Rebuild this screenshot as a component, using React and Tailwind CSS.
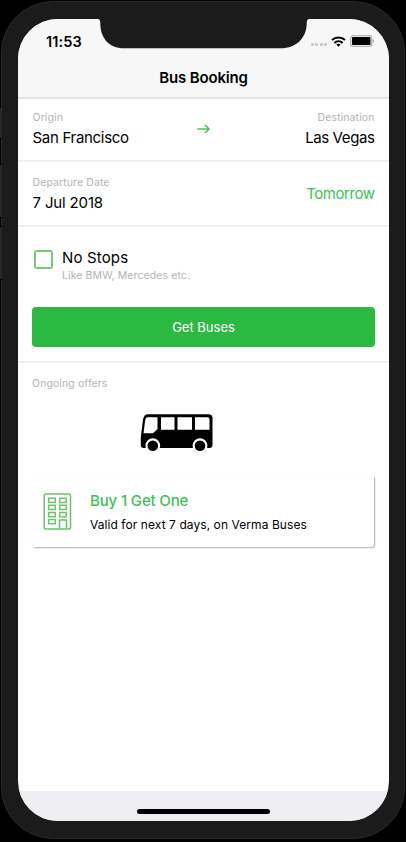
function Wifi() {
  return (
    <svg width="15" height="11" viewBox="0 0 15 11" fill="none" stroke="#000" strokeWidth="2.100">
      <path d="M1 4.1C4.7.7 10.3.7 14 4.1" />
      <path d="M3.4 6.9c2.4-2.2 5.800-2.200 8.200 0" />
      <path d="M7.500 10.700 5.300 8.600c1.300-1 3.100-1 4.400 0z" fill="#000" stroke="none" />
    </svg>
  );
}

function Battery() {
  return (
    <svg width="25" height="12" viewBox="0 0 25 12">
      <rect x=".7" y=".7" width="21" height="10.600" rx="2.300" fill="#f7f7f7" stroke="#b4b4b4" strokeWidth="1.300" />
      <rect x="2" y="2" width="18.500" height="8" rx="1" fill="#000" />
      <path d="M22.700 4v4c.9-.3 1.400-1 1.400-2s-.5-1.700-1.400-2z" fill="#aaa" />
    </svg>
  );
}

function StatusBar() {
  return (
    <div className="flex h-11 shrink-0 items-start justify-between pl-[28px] pr-[14px]">
      <span className="mt-[13px] text-[14.500px] leading-5 font-semibold tracking-[0.15px]">11:53</span>
      <div className="mt-[16px] flex items-center">
        <div className="mt-[7px] mr-[4px] flex gap-[1.500px]">
          <i className="size-[3px] rounded-[1px] bg-[#c8c8c8]" />
          <i className="size-[3px] rounded-[1px] bg-[#c8c8c8]" />
          <i className="size-[3px] rounded-[1px] bg-[#c8c8c8]" />
          <i className="size-[3px] rounded-[1px] bg-[#c8c8c8]" />
        </div>
        <Wifi />
        <div className="ml-[4px]"><Battery /></div>
      </div>
    </div>
  );
}

function Notch() {
  return (
    <svg className="absolute top-0 left-[80px]" width="211" height="30" viewBox="0 0 211 30">
      <path d="M0 0C2 .2 2.300 2 2.300 5C2.600 19 11 29.300 26 29.300H183C198 29.300 208.400 19 208.700 5C208.700 2 209 .2 211 0Z" fill="#1b1b1b" />
    </svg>
  );
}

function Arrow() {
  return (
    <svg width="13" height="10" viewBox="0 0 13 10" fill="none" stroke="#5cbf59" strokeWidth="1.700">
      <path d="M.3 5H12M8 1l4 4-4 4" />
    </svg>
  );
}

function Bus() {
  return (
    <svg width="73" height="39" viewBox="0 0 73 39">
      <path d="M8 .3h60.500q4 0 4 4V31q0 3-3 3H3.500Q.8 34 .8 31V23L3 5.500Q4 .3 8 .3z" fill="#000" />
      <path d="M7.500 3.300H17.500V15L13 19.300H3.500L5.300 5.500Q6 3.300 7.500 3.300z" fill="#fff" />
      <path d="M21 3.300H34.500V15.700H21zM37.500 3.300H52V15.700H37.500zM55 3.300H67.500Q69.500 3.300 69.500 5.300V15.700H55z" fill="#fff" />
      <circle cx="12.800" cy="31.700" r="7.400" fill="#fff" />
      <circle cx="60" cy="31.700" r="7.400" fill="#fff" />
      <circle cx="12.800" cy="31.700" r="5.300" fill="#000" />
      <circle cx="60" cy="31.700" r="5.300" fill="#000" />
    </svg>
  );
}

function Building() {
  return (
    <svg width="29" height="37" viewBox="0 0 29 37" fill="none" stroke="#6cc468" strokeWidth="1.500">
      <rect x="1.200" y="1.100" width="26.300" height="34.800" rx="1.200" />
      <path d="M5.700 5.200h6.500v4.300H5.700zM5.700 12.200h6.500v4.300H5.700zM5.700 19.500h6.500v4.300H5.700zM5.700 26.500h6.500v4.300H5.700zM16.700 5.200h6.500v4.300h-6.500zM16.700 12.200h6.500v4.300h-6.500zM16.700 19.500h6.500v4.300h-6.500zM16.500 35.500v-8.500h7v8.500" />
    </svg>
  );
}

const label = "text-[10.500px] leading-[14px] tracking-[0.1px] text-[#b4b4b4]";

export default function App() {
  return (
    <div className="relative h-[842px] w-[406px] overflow-hidden bg-black font-['Inter','Liberation_Sans',sans-serif] text-black">
      <div className="absolute top-px left-px h-[838px] w-[404px] rounded-[52px] border border-[#2a2a2a] bg-[#1b1b1b]" />
      <div className="absolute top-[108px] left-0 h-[31px] w-[2px] border-b border-black bg-[#272727]" />
      <div className="absolute top-[164px] left-0 h-[54px] w-[2px] border-y border-black bg-[#272727]" />
      <div className="absolute top-[226px] left-0 h-[54px] w-[2px] border-y border-black bg-[#272727]" />
      <div className="absolute top-[19px] left-[18px] flex h-[802px] w-[371px] flex-col overflow-hidden rounded-[40px] bg-white">
        <header className="flex h-[80px] shrink-0 flex-col border-b-2 border-[#e3e3e4] bg-[#f7f7f7]">
          <StatusBar />
          <h1 className="mt-[5px] text-center text-[15px] leading-5 font-semibold tracking-[-0.15px]">Bus Booking</h1>
        </header>
        <Notch />
        <section className="flex h-[63px] shrink-0 items-start justify-between border-b-2 border-[#efeff4] px-[14.500px] pt-[12px]">
          <div className="w-[120px]">
            <p className={label}>Origin</p>
            <p className="mt-[3px] text-[15px] leading-5 tracking-[-0.3px]">San Francisco</p>
          </div>
          <div className="mt-[13px]"><Arrow /></div>
          <div className="w-[120px] text-right">
            <p className={label}>Destination</p>
            <p className="mt-[3px] text-[15px] leading-5 tracking-[-0.4px]">Las Vegas</p>
          </div>
        </section>
        <section className="flex h-[65px] shrink-0 items-start justify-between border-b-2 border-[#efeff4] px-[14.500px] pt-[14px]">
          <div>
            <p className={label}>Departure Date</p>
            <p className="mt-[3px] text-[15px] leading-5 tracking-[-0.15px]">7 Jul 2018</p>
          </div>
          <span className="mt-[8px] text-[15px] leading-5 tracking-[-0.45px] text-[#3fc155]">Tomorrow</span>
        </section>
        <section className="flex h-[136px] shrink-0 flex-col border-b-2 border-[#efeff4] px-[14px] pt-[21px]">
          <div className="flex h-[59px] items-start">
            <span className="mt-[2px] ml-[2px] size-[19px] rounded-[3px] border-2 border-[#79ca76]" />
            <div className="ml-[9px]">
              <p className="text-[15px] leading-5 tracking-[0.15px]">No Stops</p>
              <p className={`mt-px ${label}`}>Like BMW, Mercedes etc.</p>
            </div>
          </div>
          <button className="h-[40px] w-full rounded-[4px] bg-[#2bb942] pt-px text-[13px] text-white">Get Buses</button>
        </section>
        <section className="flex grow flex-col px-[14px] pt-[14px]">
          <p className={label}>Ongoing offers</p>
          <div className="mt-[23px] ml-[108px]"><Bus /></div>
          <div className="mt-[22px] mr-px flex h-[72px] shrink-0 items-start rounded-[3px] pt-[18px] pl-[11px] shadow-[1px_1px_1.500px_rgba(0,0,0,0.32)]">
            <Building />
            <div className="-mt-px ml-[18px]">
              <p className="text-[15px] leading-[18px] font-medium tracking-[-0.15px] text-[#3fc155]">Buy 1 Get One</p>
              <p className="mt-[7px] text-[12px] leading-4 tracking-[0.07px]">Valid for next 7 days, on Verma Buses</p>
            </div>
          </div>
        </section>
        <footer className="flex h-[30px] shrink-0 items-end justify-center bg-[#efeef3] pb-[7px]">
          <div className="h-[5px] w-[133px] rounded-full bg-black" />
        </footer>
      </div>
    </div>
  );
}
